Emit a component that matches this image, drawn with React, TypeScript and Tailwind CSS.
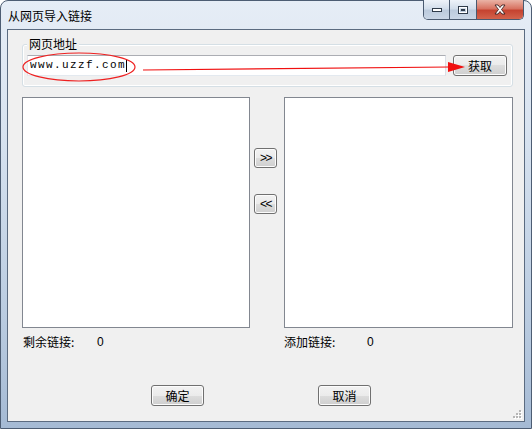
import React from 'react';

const cjk = "font-['Noto_Sans_CJK_SC','Microsoft_YaHei',sans-serif]";
const btn =
  "flex items-center justify-center rounded-[3px] border border-[#707070] bg-[linear-gradient(to_bottom,#f2f2f2_0%,#ebebeb_50%,#dddddd_50%,#cfcfcf_100%)] shadow-[inset_0_0_0_1px_#fcfcfc] text-[12px] leading-[14px] text-black";

const CaptionButtons: React.FC = () => (
  <div className="-mt-px flex h-[20px] mr-[7px] overflow-hidden rounded-b-[5px] border border-t-0 border-[#4a5a70]">
    <div className="flex w-[26px] items-center justify-center border-r border-[#4a5a70] bg-[linear-gradient(to_bottom,#eef3f9_0%,#d3deeb_45%,#bccbdd_55%,#c9d6e6_100%)]">
      <svg width="12" height="6" viewBox="0 0 12 6">
        <rect x="1.5" y="1.5" width="9" height="3" fill="#fff" stroke="#2f3b4a" />
      </svg>
    </div>
    <div className="flex w-[27px] items-center justify-center border-r border-[#4a5a70] bg-[linear-gradient(to_bottom,#eef3f9_0%,#d3deeb_45%,#bccbdd_55%,#c9d6e6_100%)]">
      <svg width="12" height="10" viewBox="0 0 12 10">
        <rect x="1.5" y="1.5" width="9" height="7" fill="none" stroke="#2f3b4a" />
        <rect x="2.5" y="2.5" width="7" height="5" fill="none" stroke="#fff" />
        <rect x="4" y="4" width="4" height="2" fill="#2f3b4a" />
      </svg>
    </div>
    <div className="flex w-[46px] items-center justify-center bg-[linear-gradient(to_bottom,#eab3a6_0%,#d87362_45%,#c54330_55%,#d3634c_100%)]">
      <svg width="14" height="11" viewBox="0 0 14 11">
        <path d="M2 1 L5 1 L7 3.5 L9 1 L12 1 L8.5 5.5 L12 10 L9 10 L7 7.5 L5 10 L2 10 L5.5 5.5 Z" fill="#fff" stroke="#3a2020" strokeWidth="0.9" strokeLinejoin="round" />
      </svg>
    </div>
  </div>
);

const App: React.FC = () => {
  return (
    <div className={`relative h-[429px] w-[532px] overflow-hidden bg-white ${cjk}`}>
      <div className="flex h-full w-full flex-col rounded-t-[8px] border border-[#4d5d73] bg-[linear-gradient(to_bottom,#e6edf6_0%,#d8e3f0_30%,#b9cbe0_75%,#a5bad4_100%)]">
        {/* title bar */}
        <div className="flex h-[28px] items-start justify-between">
          <div className="pl-[7px] pt-[7px] text-[12px] leading-[16px] text-black">从网页导入链接</div>
          <CaptionButtons />
        </div>

        {/* client area */}
        <div className="relative mx-[6px] mb-[6px] flex flex-1 flex-col border border-[#5b6b80] bg-[#f0f0f0] pl-[14px] pr-[11px] pt-[14px]">
          {/* group box */}
          <div className="relative h-[43px] rounded-[3px] border border-[#d5dfe5] shadow-[inset_0_0_0_1px_#ffffff] pl-[4px] pt-[10px]">
            <div className="absolute left-[4px] top-[-9px] bg-[#f0f0f0] px-[2px] text-[12px] leading-[16px] text-black">
              网页地址
            </div>
            <div className="flex items-start gap-[7px]">
              <div className="flex h-[21px] w-[419px] items-center border border-[#abadb3] border-b-[#e3e9ef] border-l-[#e2e3ea] border-r-[#dbdfe6] bg-white pl-[2px]">
                <span className="font-['Liberation_Mono',monospace] text-[11px] leading-[13px] tracking-[1.4px] text-black">
                  www.uzzf.com
                </span>
                <span className="h-[13px] w-px bg-black" />
              </div>
              <div className={`${btn} h-[21px] w-[54px]`}>获取</div>
            </div>
          </div>

          {/* lists */}
          <div className="mt-[10px] flex h-[231px]">
            <div className="w-[228px] border border-[#828790] bg-white" />
            <div className="flex w-[34px] flex-col pl-[4px] pt-[51px]">
              <div className={`${btn} h-[20px] w-[23px] font-['Liberation_Sans',sans-serif] text-[11px] font-light tracking-[-1.5px]`}>&gt;&gt;</div>
              <div className={`${btn} mt-[26px] h-[20px] w-[23px] font-['Liberation_Sans',sans-serif] text-[11px] font-light tracking-[-1.5px]`}>&lt;&lt;</div>
            </div>
            <div className="flex-1 border border-[#828790] bg-white" />
          </div>

          {/* counters */}
          <div className="mt-[7px] flex h-[14px] text-[12px] leading-[14px] text-black">
            <div className="flex w-[262px] pl-[1px]">
              <span className="w-[74px]">剩余链接:</span>
              <span className="font-['Liberation_Sans',sans-serif]">0</span>
            </div>
            <div className="flex">
              <span className="w-[83px]">添加链接:</span>
              <span className="font-['Liberation_Sans',sans-serif]">0</span>
            </div>
          </div>

          {/* dialog buttons */}
          <div className="mt-[36px] flex">
            <div className={`${btn} ml-[129px] h-[21px] w-[53px] border-[#3c7fb1] shadow-[inset_0_0_0_1px_#8ed3f5]`}>确定</div>
            <div className={`${btn} ml-[114px] h-[21px] w-[53px]`}>取消</div>
          </div>

          {/* resize grip */}
          <svg className="absolute bottom-[2px] right-[2px]" width="10" height="10" viewBox="0 0 10 10">
            {[
              [7, 1],
              [4, 4],
              [7, 4],
              [1, 7],
              [4, 7],
              [7, 7],
            ].map(([x, y], i) => (
              <g key={i}>
                <rect x={x + 1} y={y + 1} width="2" height="2" fill="#fff" />
                <rect x={x} y={y} width="2" height="2" fill="#b5b5b5" />
              </g>
            ))}
          </svg>
        </div>
      </div>

      {/* red annotation */}
      <svg className="pointer-events-none absolute left-0 top-0" width="532" height="429" viewBox="0 0 532 429">
        <ellipse cx="79" cy="67" rx="56" ry="14" fill="none" stroke="#ee2020" strokeWidth="1.2" />
        <line x1="143" y1="70" x2="450" y2="67" stroke="#f01010" strokeWidth="1.2" />
        <polygon points="448,62 465,67 448,72" fill="#f01010" />
      </svg>
    </div>
  );
};

export default App;
